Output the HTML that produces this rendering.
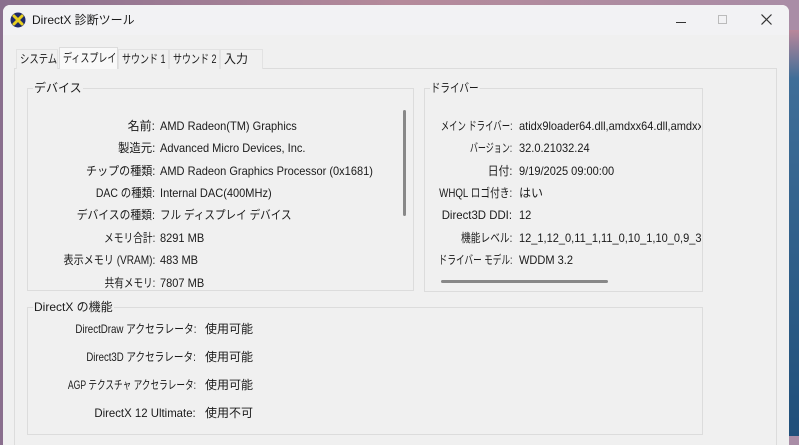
<!DOCTYPE html>
<html><head><meta charset="utf-8"><style>
*{margin:0;padding:0;box-sizing:border-box}
body{width:799px;height:436px;overflow:hidden;position:relative;background:linear-gradient(90deg,#8a6f8e,#b58a9a 50%,#a98da6);font-family:"Liberation Sans","Noto Sans CJK JP",sans-serif;font-size:12px;color:#1a1a1a;line-height:14px}
.blue{position:absolute;left:789px;top:30px;width:10px;height:406px;background:linear-gradient(#b9879a,#3f6e98 12%,#1f4f7a)}
.win{position:absolute;left:3px;top:5px;width:786px;height:440px;background:#f0f0f0;border-radius:7px 7px 0 0;overflow:hidden}
.title{position:absolute;left:0;top:0;width:786px;height:30px;background:#f2f2f4}
.ttl{position:absolute;left:29px;top:8px;font-size:12px}
.abs{position:absolute;white-space:nowrap}
.tab{position:absolute;top:44px;height:20px;line-height:18px;padding-left:3px;background:#f0f0f0;border:1px solid #e2e2e2;border-bottom:none;white-space:nowrap;overflow:hidden}
.tab span{display:inline-block;transform-origin:left center}
.page{position:absolute;left:11px;top:63px;width:763px;height:380px;border:1px solid #dcdcdc;background:#f0f0f0}
.box{position:absolute;border:1px solid #dcdcdc}
.lg{position:absolute;top:-8px;left:5px;background:#f0f0f0;padding:0 1px;white-space:nowrap}
.r{position:absolute;white-space:nowrap;transform-origin:right center}
.v{position:absolute;white-space:nowrap;transform-origin:left center}
.s{transform:scaleX(.92)}
</style></head><body>
<div class="blue"></div>
<div class="win">
 <div class="title">
  <svg class="abs" style="left:7px;top:7px" width="16" height="16" viewBox="0 0 16 16"><circle cx="8" cy="8" r="7.5" fill="#1f2a6a"/><path d="M4 4L12 12M12 4L4 12" stroke="#e8d020" stroke-width="3" stroke-linecap="round"/></svg>
  <div class="ttl">DirectX 診断ツール</div>
  <div class="abs" style="left:673px;top:17px;width:10px;height:1px;background:#333"></div>
  <div class="abs" style="left:715px;top:10px;width:9px;height:9px;border:1px solid #bbb"></div>
  <svg class="abs" style="left:758px;top:9px" width="11" height="11"><path d="M0.5 0.5L10.5 10.5M10.5 0.5L0.5 10.5" stroke="#333" stroke-width="1.2"/></svg>
 </div>
 <div class="page"></div>
 <div class="tab" style="left:13px;width:42px"><span style="transform:scaleX(.78)">システム</span></div>
 <div class="tab" style="left:56px;top:42px;height:22px;width:59px;background:#f9f9f9;border-color:#dcdcdc;line-height:20px"><span style="transform:scaleX(.75)">ディスプレイ</span></div>
 <div class="tab" style="left:115px;width:51px"><span style="transform:scaleX(.75)">サウンド 1</span></div>
 <div class="tab" style="left:166px;width:51px"><span style="transform:scaleX(.75)">サウンド 2</span></div>
 <div class="tab" style="left:217px;width:43px"><span>入力</span></div>

 <div class="box" style="left:24px;top:83px;width:387px;height:203px"><span class="lg">デバイス</span></div>
 <div class="abs" style="left:400px;top:105px;width:3px;height:106px;background:#888;border-radius:2px"></div>
 <div class="box" style="left:421px;top:83px;width:279px;height:204px"><span class="lg" style="transform:scaleX(.8);transform-origin:left">ドライバー</span></div>
 <div class="abs" style="left:438px;top:275px;width:167px;height:3px;background:#888;border-radius:2px"></div>
 <div class="box" style="left:24px;top:302px;width:676px;height:128px"><span class="lg">DirectX の機能</span></div>

 <div class="r" style="right:634px;top:114px">名前:</div><div class="v s" style="left:157px;top:114px">AMD Radeon(TM) Graphics</div>
 <div class="r" style="right:634px;top:136px;transform:scaleX(.95)">製造元:</div><div class="v s" style="left:157px;top:136px">Advanced Micro Devices, Inc.</div>
 <div class="r" style="right:634px;top:159px;transform:scaleX(.92)">チップの種類:</div><div class="v s" style="left:157px;top:159px">AMD Radeon Graphics Processor (0x1681)</div>
 <div class="r" style="right:634px;top:181px;transform:scaleX(.87)">DAC の種類:</div><div class="v s" style="left:157px;top:181px">Internal DAC(400MHz)</div>
 <div class="r" style="right:634px;top:203px;transform:scaleX(.9)">デバイスの種類:</div><div class="v" style="left:157px;top:203px;transform:scaleX(.88)">フル ディスプレイ デバイス</div>
 <div class="r" style="right:634px;top:226px;transform:scaleX(.81)">メモリ合計:</div><div class="v s" style="left:157px;top:226px">8291 MB</div>
 <div class="r" style="right:634px;top:248px;transform:scaleX(.84)">表示メモリ (VRAM):</div><div class="v s" style="left:157px;top:248px">483 MB</div>
 <div class="r" style="right:634px;top:271px;transform:scaleX(.8)">共有メモリ:</div><div class="v s" style="left:157px;top:271px">7807 MB</div>

 <div class="abs" style="left:516px;top:114px;width:182px;height:160px;overflow:hidden">
  <div class="v s" style="left:0;top:0">atidx9loader64.dll,amdxx64.dll,amdxx64.dll</div>
  <div class="v s" style="left:0;top:22px">32.0.21032.24</div>
  <div class="v s" style="left:0;top:45px">9/19/2025 09:00:00</div>
  <div class="v" style="left:0;top:67px">はい</div>
  <div class="v s" style="left:0;top:89px">12</div>
  <div class="v s" style="left:0;top:112px">12_1,12_0,11_1,11_0,10_1,10_0,9_3,9_2,9_1</div>
  <div class="v s" style="left:0;top:134px">WDDM 3.2</div>
 </div>
 <div class="r" style="right:277px;top:114px;transform:scaleX(.7)">メイン ドライバー:</div>
 <div class="r" style="right:277px;top:136px;transform:scaleX(.67)">バージョン:</div>
 <div class="r" style="right:277px;top:159px;transform:scaleX(.9)">日付:</div>
 <div class="r" style="right:277px;top:181px;transform:scaleX(.81)">WHQL ロゴ付き:</div>
 <div class="r" style="right:277px;top:203px;transform:scaleX(.95)">Direct3D DDI:</div>
 <div class="r" style="right:277px;top:226px;transform:scaleX(.81)">機能レベル:</div>
 <div class="r" style="right:277px;top:248px;transform:scaleX(.72)">ドライバー モデル:</div>

 <div class="r" style="right:593px;top:317px;transform:scaleX(.81)">DirectDraw アクセラレータ:</div><div class="v" style="left:202px;top:317px">使用可能</div>
 <div class="r" style="right:593px;top:345px;transform:scaleX(.8)">Direct3D アクセラレータ:</div><div class="v" style="left:202px;top:345px">使用可能</div>
 <div class="r" style="right:593px;top:373px;transform:scaleX(.72)">AGP テクスチャ アクセラレータ:</div><div class="v" style="left:202px;top:373px">使用可能</div>
 <div class="r" style="right:593px;top:401px;transform:scaleX(.95)">DirectX 12 Ultimate:</div><div class="v" style="left:202px;top:401px">使用不可</div>
</div>
</body></html>
